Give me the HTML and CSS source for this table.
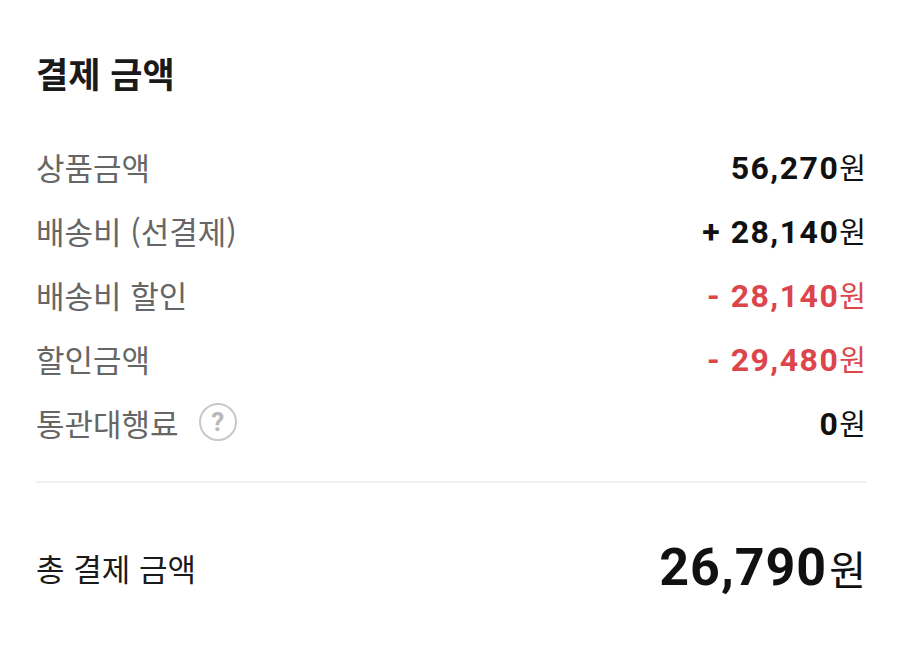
FILE: index.html
```html
<!DOCTYPE html>
<html lang="ko">
<head>
<meta charset="utf-8">
<link rel="stylesheet" href="styles.css">
</head>
<body>
<section class="summary">
  <h2 class="title">결제 금액</h2>
  <ul class="rows">
    <li class="row">
      <span class="label">상품금액</span>
      <span class="value"><span class="num">56,270</span><span class="won">원</span></span>
    </li>
    <li class="row">
      <span class="label">배송비 (선결제)</span>
      <span class="value"><span class="num">+ 28,140</span><span class="won">원</span></span>
    </li>
    <li class="row">
      <span class="label">배송비 할인</span>
      <span class="value minus"><span class="num">- 28,140</span><span class="won">원</span></span>
    </li>
    <li class="row">
      <span class="label">할인금액</span>
      <span class="value minus"><span class="num">- 29,480</span><span class="won">원</span></span>
    </li>
    <li class="row">
      <span class="label">통관대행료 <span class="help">?</span></span>
      <span class="value"><span class="num">0</span><span class="won">원</span></span>
    </li>
  </ul>
  <div class="total">
    <span class="total-label">총 결제 금액</span>
    <span class="total-value"><span class="num">26,790</span><span class="won">원</span></span>
  </div>
</section>
</body>
</html>
```
FILE: styles.css
```css
html, body {
  margin: 0;
  padding: 0;
  background: #fff;
}
body {
  font-family: Roboto, "Noto Sans CJK KR", sans-serif;
  color: #1a1a1a;
}
.summary {
  padding: 49px 34px 0 36px;
}
.title {
  margin: 0;
  font-family: "Noto Sans CJK KR", sans-serif;
  font-size: 35px;
  font-weight: 700;
  line-height: 48px;
  color: #1a1a1a;
}
.rows {
  list-style: none;
  margin: 0;
  padding: 37px 0 27px;
  border-bottom: 2px solid #f0f0f0;
}
.row {
  display: flex;
  justify-content: space-between;
  align-items: center;
  height: 64px;
}
.label {
  display: flex;
  align-items: center;
  gap: 20px;
  font-family: "Noto Sans CJK KR", sans-serif;
  font-size: 31px;
  color: #666;
}
.help {
  display: inline-flex;
  align-items: center;
  justify-content: center;
  width: 34px;
  height: 34px;
  border: 2px solid #c8c8c8;
  border-radius: 50%;
  font-family: Roboto, sans-serif;
  font-size: 26px;
  font-weight: 700;
  color: #b8b8b8;
  box-sizing: content-box;
}
.value {
  display: flex;
  align-items: baseline;
  color: #111;
}
.value.minus {
  color: #db464c;
}
.num {
  font-family: Roboto, sans-serif;
  font-weight: 700;
  font-size: 32px;
  letter-spacing: 1.5px;
}
.won {
  font-family: "Noto Sans CJK KR", sans-serif;
  font-size: 29px;
  font-weight: 400;
  margin-left: 0;
}
.total {
  display: flex;
  justify-content: space-between;
  align-items: center;
  height: 168px;
}
.total-label {
  font-family: "Noto Sans CJK KR", sans-serif;
  font-size: 31px;
  color: #1a1a1a;
}
.total-value {
  display: flex;
  align-items: baseline;
  color: #111;
}
.total-value .num {
  font-size: 52px;
  letter-spacing: 1px;
}
.total-value .won {
  font-size: 40px;
  margin-left: 2px;
}
```
